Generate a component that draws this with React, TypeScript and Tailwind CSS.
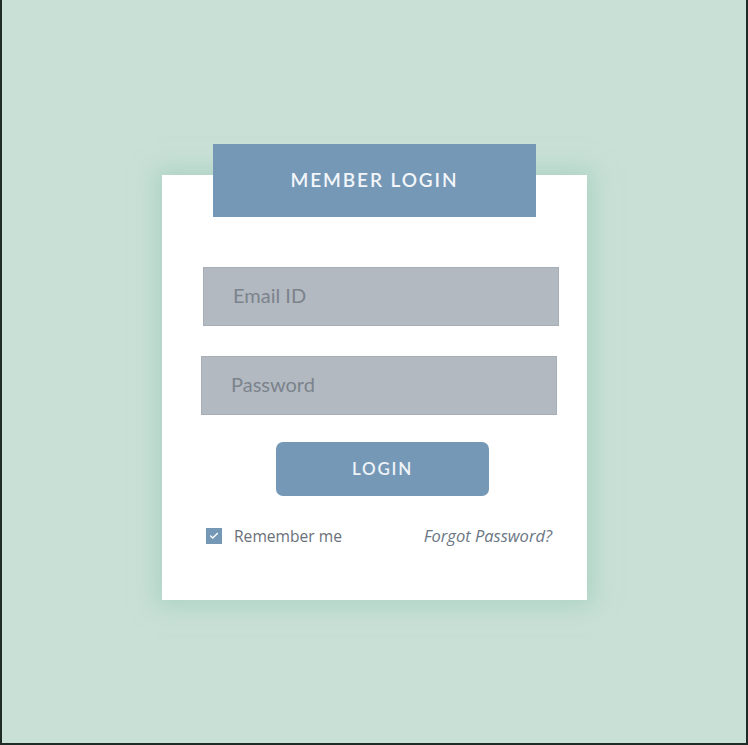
import { Check } from 'lucide-react';

const App = () => {
  return (
    <div className="w-[748px] h-[745px] bg-[#c9e0d7] border-x-2 border-b-2 border-[#1e2b26] font-['Lato',sans-serif] pt-[175px] pl-[160px] box-border">
      <div className="w-[425px] h-[425px] bg-white shadow-[0_0_22px_6px_rgba(150,200,180,0.55)] flex flex-col">
        <div className="mx-auto -mt-[31px] w-[323px] h-[73px] bg-[#7598b6] flex items-center justify-center">
          <h1 className="text-[#f2f6fa] text-[19px] font-semibold tracking-[0.1em]">MEMBER LOGIN</h1>
        </div>

        <form className="flex flex-col" onSubmit={(e) => e.preventDefault()}>
          <input
            type="text"
            placeholder="Email ID"
            className="ml-[41px] mt-[50px] w-[356px] h-[59px] bg-[#b3b9c0] border border-[#a8aeb5] px-[29px] pb-[3px] text-[20px] text-[#5f6770] placeholder:text-[#7b838c] outline-none"
          />
          <input
            type="password"
            placeholder="Password"
            className="ml-[39px] mt-[30px] w-[356px] h-[59px] bg-[#b3b9c0] border border-[#a8aeb5] px-[29px] pb-[3px] text-[20px] text-[#5f6770] placeholder:text-[#7b838c] outline-none"
          />
          <button className="ml-[114px] mt-[27px] w-[213px] h-[54px] rounded-[7px] bg-[#7598b6] text-[#eef3f8] text-[17px] font-semibold tracking-[0.1em]">
            LOGIN
          </button>

          <div className="mt-[28px] pl-[44px] pr-[35px] flex items-center justify-between font-['Open_Sans',sans-serif]">
            <label className="flex items-center gap-3">
              <span className="w-4 h-4 bg-[#7598b6] flex items-center justify-center">
                <Check className="w-[10px] h-[10px] text-white" strokeWidth={3.5} />
              </span>
              <span className="text-[15.6px] text-[#6a7079]">Remember me</span>
            </label>
            <a className="text-[16.5px] italic text-[#6b7683]">Forgot Password?</a>
          </div>
        </form>
      </div>
    </div>
  );
};

export default App;
